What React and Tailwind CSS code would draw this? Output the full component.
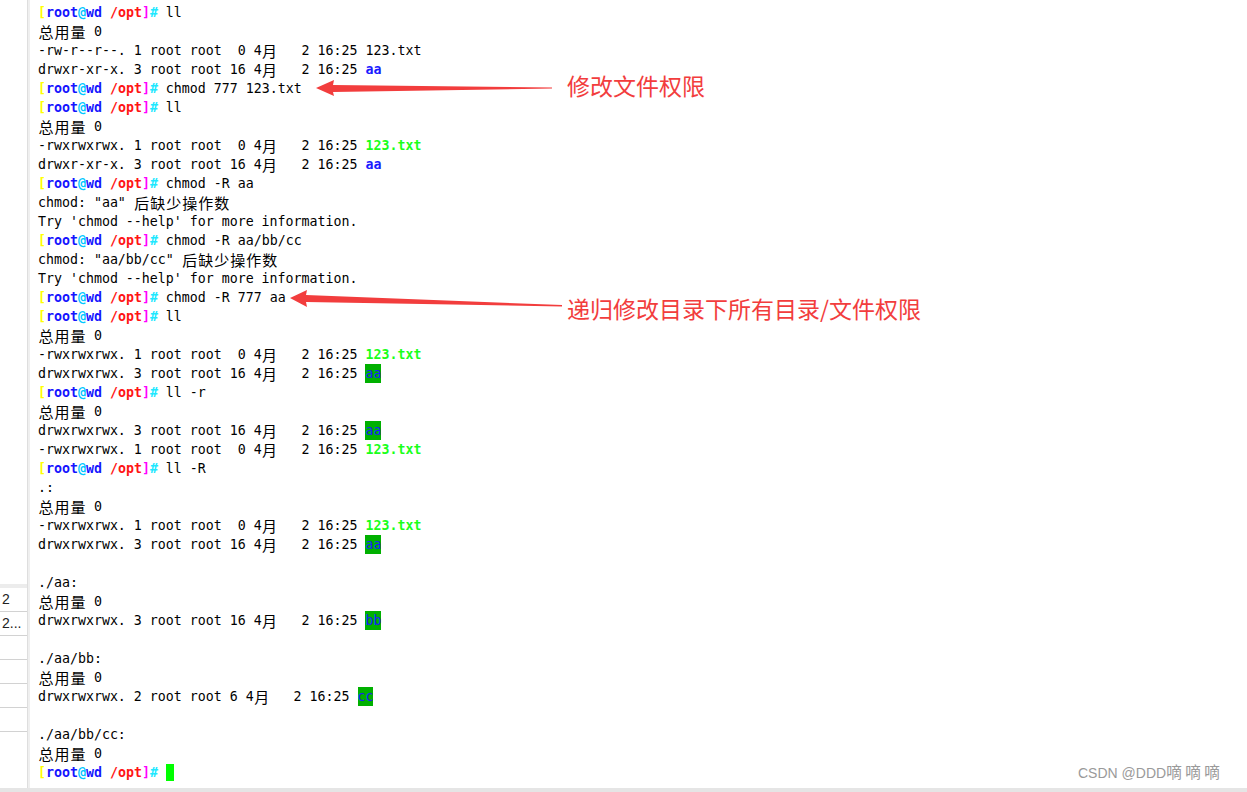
// Terminal screenshot: chmod examples
const CJK = /[\u3000-\u9fff\uff00-\uffef]/;

// render text, giving every CJK char a double-width cell like the terminal does
function Txt({ s }) {
  const out = [];
  let buf = "";
  [...s].forEach((ch, i) => {
    if (CJK.test(ch)) {
      if (buf) out.push(buf);
      buf = "";
      out.push(
        <span
          key={i}
          className="inline-block align-top w-[16px] text-center font-['Noto_Sans_CJK_SC',sans-serif] text-[15px] leading-[19px]"
        >
          {ch}
        </span>
      );
    } else buf += ch;
  });
  if (buf) out.push(buf);
  return <>{out}</>;
}

function Prompt({ cmd }) {
  return (
    <>
      <span className="font-bold">
        <span className="text-[#ffff00]">[</span>
        <span className="text-[#1515ff]">root</span>
        <span className="text-[#00c8ff]">@</span>
        <span className="text-[#1515ff]">wd</span>
        <span className="text-[#ff1414]"> /opt</span>
        <span className="text-[#ff00ff]">]</span>
        <span className="text-[#1ee8ff]">#</span>
      </span>
      {cmd !== undefined && " " + cmd}
    </>
  );
}

const Dir = ({ n }) => <span className="font-bold text-[#1a1aff]">{n}</span>;
const Exe = ({ n }) => <span className="font-bold text-[#1aff1a]">{n}</span>;
const Hl = ({ n }) => (
  <span className="inline-block align-top h-[19px] bg-[#00b000] text-[#1a1aff]">{n}</span>
);

const total = <Txt s="总用量 0" />;
const f1 = "-rwxrwxrwx. 1 root root  0 4月   2 16:25 ";
const d3 = "drwxrwxrwx. 3 root root 16 4月   2 16:25 ";

const lines = [
  <Prompt cmd="ll" />,
  total,
  <Txt s="-rw-r--r--. 1 root root  0 4月   2 16:25 123.txt" />,
  <><Txt s="drwxr-xr-x. 3 root root 16 4月   2 16:25 " /><Dir n="aa" /></>,
  <Prompt cmd="chmod 777 123.txt" />,
  <Prompt cmd="ll" />,
  total,
  <><Txt s={f1} /><Exe n="123.txt" /></>,
  <><Txt s="drwxr-xr-x. 3 root root 16 4月   2 16:25 " /><Dir n="aa" /></>,
  <Prompt cmd="chmod -R aa" />,
  <Txt s='chmod: "aa" 后缺少操作数' />,
  "Try 'chmod --help' for more information.",
  <Prompt cmd="chmod -R aa/bb/cc" />,
  <Txt s='chmod: "aa/bb/cc" 后缺少操作数' />,
  "Try 'chmod --help' for more information.",
  <Prompt cmd="chmod -R 777 aa" />,
  <Prompt cmd="ll" />,
  total,
  <><Txt s={f1} /><Exe n="123.txt" /></>,
  <><Txt s={d3} /><Hl n="aa" /></>,
  <Prompt cmd="ll -r" />,
  total,
  <><Txt s={d3} /><Hl n="aa" /></>,
  <><Txt s={f1} /><Exe n="123.txt" /></>,
  <Prompt cmd="ll -R" />,
  ".:",
  total,
  <><Txt s={f1} /><Exe n="123.txt" /></>,
  <><Txt s={d3} /><Hl n="aa" /></>,
  "",
  "./aa:",
  total,
  <><Txt s={d3} /><Hl n="bb" /></>,
  "",
  "./aa/bb:",
  total,
  <><Txt s="drwxrwxrwx. 2 root root 6 4月   2 16:25 " /><Hl n="cc" /></>,
  "",
  "./aa/bb/cc:",
  total,
  <>
    <Prompt cmd="" />
    <span className="inline-block align-top mt-[1px] w-[8px] h-[17px] bg-[#00ff00]" />
  </>,
];

export default function App() {
  return (
    <div className="relative w-[1247px] h-[792px] flex flex-col bg-white overflow-hidden">
      <div className="flex flex-1 min-h-0">
        {/* left session list */}
        <aside className="w-[28px] flex flex-col border-r border-[#dedede] font-['Liberation_Sans',sans-serif] text-[14px] text-[#222]">
          <div className="h-[584px]" />
          <div className="h-[4px] bg-[#ececec]" />
          <div className="h-[24px] border-b border-[#d2d2d2] pl-[2px] leading-[23px]">2</div>
          <div className="h-[24px] border-b border-[#d2d2d2] pl-[2px] leading-[23px] whitespace-nowrap overflow-hidden">2...</div>
          <div className="h-[24px] border-b border-[#d2d2d2]" />
          <div className="h-[24px] border-b border-[#d2d2d2]" />
          <div className="h-[24px] border-b border-[#d2d2d2]" />
          <div className="h-[24px] border-b border-[#d2d2d2]" />
        </aside>
        <div className="w-[2px] bg-[#efefef]" />

        {/* terminal */}
        <main className="flex-1 pl-[8px] pt-[3px] font-['DejaVu_Sans_Mono',monospace] text-[13.288px] leading-[19px] text-black whitespace-pre">
          {lines.map((l, i) => (
            <div key={i} className="h-[19px]">
              {l}
            </div>
          ))}
        </main>
      </div>
      <div className="h-[4px] bg-[#e5e5e5]" />

      {/* annotations */}
      <svg
        className="absolute inset-0 pointer-events-none"
        width="1247"
        height="792"
        viewBox="0 0 1247 792"
      >
        <polygon
          fill="#f23d3d"
          points="316,88 334,80 333,85 552,87.4 552,88.6 333,92 334,96"
        />
        <polygon
          fill="#f23d3d"
          points="290,298 307,290 306,295 562,305 562,306.4 306,302 307,307"
        />
      </svg>
      <div className="absolute left-[567px] top-[73px] font-['Noto_Sans_CJK_SC',sans-serif] text-[23px] leading-[24px] text-[#f23d3d]">
        修改文件权限
      </div>
      <div className="absolute left-[567px] top-[296px] font-['Noto_Sans_CJK_SC',sans-serif] text-[23px] leading-[24px] text-[#f23d3d]">
        递归修改目录下所有目录/文件权限
      </div>
      <div className="absolute left-[1078px] top-[764px] font-['Liberation_Sans','Noto_Sans_CJK_SC',sans-serif] text-[14px] leading-[18px] text-[#9a9a9a]">
        CSDN @DDD<span className="text-[16px] tracking-[3px]">嘀嘀嘀</span>
      </div>
    </div>
  );
}
